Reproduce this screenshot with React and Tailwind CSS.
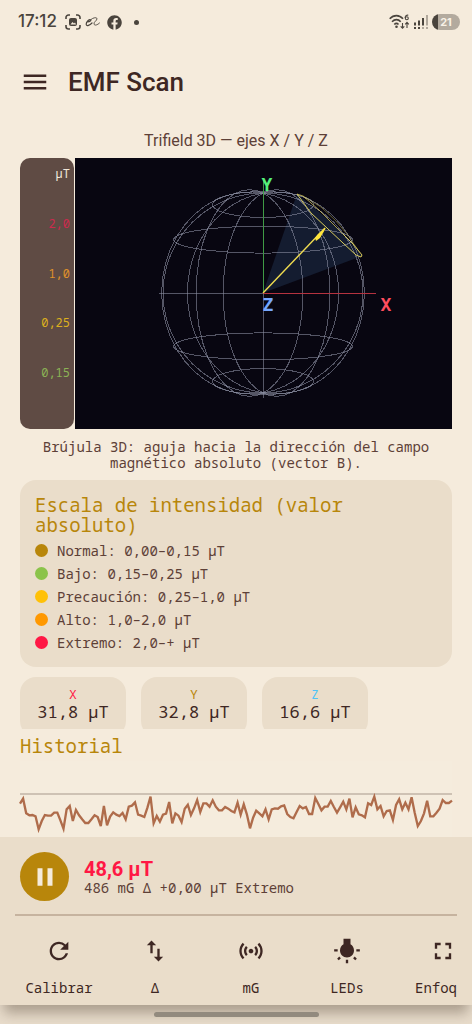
import { useState } from "react";
import { MdMenu, MdPause, MdPlayArrow, MdRefresh, MdImportExport, MdSensors, MdWbIncandescent, MdFullscreen } from "react-icons/md";
import { FaFacebook } from "react-icons/fa";

const escala = [
  { label: "2,0", color: "text-[#cc2a4e]" },
  { label: "1,0", color: "text-[#e0922a]" },
  { label: "0,25", color: "text-[#dcb01e]" },
  { label: "0,15", color: "text-[#8bb255]" },
];

const niveles = [
  { texto: "Normal: 0,00–0,15 µT", color: "bg-[#b8860b]" },
  { texto: "Bajo: 0,15–0,25 µT", color: "bg-[#8bc34a]" },
  { texto: "Precaución: 0,25–1,0 µT", color: "bg-[#ffc107]" },
  { texto: "Alto: 1,0–2,0 µT", color: "bg-[#ff9800]" },
  { texto: "Extremo: 2,0–+ µT", color: "bg-[#ff1744]" },
];

const ejes = [
  { eje: "X", valor: "31,8 µT", color: "text-[#ff1744]" },
  { eje: "Y", valor: "32,8 µT", color: "text-[#b8860b]" },
  { eje: "Z", valor: "16,6 µT", color: "text-[#4fc3f7]" },
];

const acciones = [
  { label: "Calibrar", Icon: MdRefresh, caja: "w-[88px] items-center" },
  { label: "Δ", Icon: MdImportExport, caja: "w-[88px] items-center" },
  { label: "mG", Icon: MdSensors, caja: "w-[88px] items-center" },
  { label: "LEDs", Icon: MdWbIncandescent, caja: "w-[88px] items-center" },
  { label: "Enfoq", Icon: MdFullscreen, caja: "w-[58px] items-end" },
];

const muestras = [
  143, 128, 172, 178, 177, 181, 220, 195, 177, 179, 179, 170, 170, 193, 218, 160, 150, 195, 162, 178, 190, 201, 201,
  190, 178, 183, 210, 150, 208, 182, 169, 176, 180, 171, 190, 152, 149, 139, 176, 179, 183, 155, 122, 202, 180, 197,
  176, 173, 138, 202, 172, 179, 198, 158, 146, 177, 157, 132, 168, 142, 142, 152, 133, 152, 163, 163, 153, 158, 165,
  169, 140, 176, 145, 175, 217, 185, 164, 172, 181, 160, 190, 160, 157, 158, 151, 148, 174, 183, 187, 168, 150, 157,
  153, 174, 174, 126, 144, 163, 152, 152, 135, 153, 170, 154, 137, 160, 128, 184, 154, 175, 178, 184, 142, 147, 122,
  160, 150, 181, 165, 163, 192, 147, 130, 160, 140, 160, 124, 170, 210, 195, 172, 134, 181, 181, 170, 158, 132, 141,
  141, 134,
];

// perspective projection of a point on the unit sphere
const RADIO = 100;
const CAMARA = 3.43;
function proyectar(x, y, z) {
  const k = (RADIO * CAMARA) / (CAMARA - z);
  return `${(x * k).toFixed(1)},${(-y * k).toFixed(1)}`;
}

const vueltas = Array.from({ length: 49 }, (_, i) => (i * Math.PI) / 24);
const rad = (g) => (g * Math.PI) / 180;

const paralelos = [-60, -30, 0, 30, 60].map((g) =>
  vueltas.map((t) => proyectar(Math.cos(rad(g)) * Math.sin(t), Math.sin(rad(g)), Math.cos(rad(g)) * Math.cos(t))).join(" ")
);
const meridianos = [0, 30, 60, 90, 120, 150].map((g) =>
  vueltas.map((t) => proyectar(Math.cos(t) * Math.sin(rad(g)), Math.sin(t), Math.cos(t) * Math.cos(rad(g)))).join(" ")
);

function Esfera() {
  return (
    <svg viewBox="-188 -135 377 271" className="block w-full" role="img" aria-label="Brújula 3D">
      <polygon points="0,0 34,-99 62,-76 82,-58 99,-37" fill="#141c30" />
      <g fill="none" stroke="#8d90a3" strokeWidth="1" strokeOpacity="0.58" shapeRendering="crispEdges">
        {[...paralelos, ...meridianos].map((p, i) => (
          <polyline key={i} points={p} />
        ))}
      </g>
      <g strokeWidth="1" shapeRendering="crispEdges">
        <line x1="0" y1="0" x2="113" y2="0" stroke="#b5323f" />
        <line x1="0" y1="0" x2="0" y2="-113" stroke="#3f9a45" />
      </g>
      <g fill="none" stroke="#d8cb5c" strokeWidth="1">
        <path d="M34 -99 L48 -80 L64 -65 L80 -50 L93 -38 L98 -36 L99 -38 L90 -49 L80 -59" />
        <path d="M34 -99 L40 -97 L56 -83 L80 -59" strokeOpacity="0.75" />
        <path d="M40 -97 L58 -86 L72 -73 L84 -59 L97 -40" strokeOpacity="0.45" />
        <line x1="0" y1="0" x2="62" y2="-65" stroke="#f0dc50" strokeWidth="1.4" />
      </g>
      <polygon points="63,-65 57,-55 53,-52 52,-55 55,-59" fill="#ffe43b" />
      <g className="font-['DejaVu_Sans_Mono',monospace] text-[18px] font-bold" textAnchor="middle">
        <text x="4" y="-102" fill="#55f07a">Y</text>
        <text x="5" y="18" fill="#75a7ff">Z</text>
        <text x="123" y="18" fill="#ff4d5e">X</text>
      </g>
    </svg>
  );
}

function Historial() {
  const paso = 1296 / (muestras.length - 1);
  const puntos = muestras.map((m, i) => `${(i * paso).toFixed(1)},${m}`).join(" ");
  return (
    <svg viewBox="0 15 1296 210" className="block w-full overflow-visible" role="img" aria-label="Gráfico del historial">
      <rect x="0" y="15" width="1296" height="231" fill="#f5ecdd" />
      <line x1="0" y1="114" x2="1296" y2="114" stroke="#c1b5a6" strokeWidth="4" />
      <polyline points={puntos} fill="none" stroke="#af6c4b" strokeWidth="7" />
    </svg>
  );
}

function BarraEstado() {
  return (
    <div className="flex h-11 items-center pr-3 pl-[18px] text-[#4a443d]">
      <span className="font-[Inter,sans-serif] text-[17px] font-medium">17:12</span>
      <svg viewBox="0 0 16 16" className="ml-2 size-4" fill="none" stroke="currentColor" strokeWidth="1.6">
        <path d="M1 5V3.500A2.500 2.500 0 0 1 3.500 1H5M11 1h1.500A2.500 2.500 0 0 1 15 3.500V5M15 11v1.500a2.500 2.500 0 0 1-2.500 2.500H11M5 15H3.500A2.500 2.500 0 0 1 1 12.500V11" />
        <rect x="4" y="4" width="8" height="8" rx="2" fill="currentColor" stroke="none" />
        <path d="M5.500 10.500 7.500 8l1.500 1.500 1-1 1 2z" fill="#f5ebdc" stroke="none" />
      </svg>
      <svg viewBox="0 0 16 12" className="ml-1 h-3 w-4" fill="none" stroke="currentColor" strokeWidth="0.9" strokeLinecap="round">
        <path d="M2.500 6C5 5.800 6.500 4.500 5.500 3.800S1 5.500 1.200 8.200 5 9 7 7" strokeWidth="1.200" />
        <path d="M6 3.500C8 1.500 12 1 12 2.800S8.500 6 9 8s3.500 1 5.500-1" />
      </svg>
      <FaFacebook className="ml-1.5 size-[15px]" />
      <span className="ml-3 size-[5px] rounded-full bg-current" />
      <svg viewBox="0 0 21 16" className="ml-auto h-4 w-[21px]" fill="none" stroke="currentColor" strokeWidth="1.600">
        <path d="M.7 4.800c4-4.300 9.600-4.300 13.300 0M3 7.800c2.800-2.900 6.200-2.900 8.700 0M5.300 10.500c1.500-1.500 2.800-1.500 4.200 0" />
        <circle cx="7.500" cy="12.800" r="1.300" fill="currentColor" stroke="none" />
        <path d="M13.500 9v5M11.700 12.300l1.800 1.900 1.800-1.900M18 14V8.500M16.200 10.300 18 8.400l1.800 1.900" strokeWidth="1.100" />
        <path d="M19.300 1.200c-1.800-.4-3.200.8-3.200 2.800" strokeWidth="1.100" />
        <circle cx="17.800" cy="4.200" r="1.500" strokeWidth="1.100" />
      </svg>
      <svg viewBox="0 0 14 16" className="ml-1 h-4 w-3.5" fill="currentColor">
        <path d="M0 8.500h2v3H0zM4 6.500h2v5H4zM8 4h2v7.500H8zM0 13h2v2H0zM4 13h2v2H4z" />
        <path d="M12 1h2v10.500h-2zM8 13h2v2H8zM12 13h2v2h-2z" opacity="0.4" />
      </svg>
      <span className="ml-1 flex h-4 w-7 items-center justify-center rounded-full bg-linear-to-r from-[#4a443d] from-20% to-[#b3aa9e] to-20% font-[Inter,sans-serif] text-[11px] font-bold text-[#f8f1e6]">
        21
      </span>
    </div>
  );
}

export default function App() {
  const [pausado, setPausado] = useState(false);

  return (
    <div className="flex min-h-screen flex-col overflow-hidden bg-[#f5ebdc] font-['Noto_Sans_Mono','DejaVu_Sans_Mono',monospace] text-[#5d4037]">
      <BarraEstado />

      <header className="flex h-[76px] items-center gap-[18px] px-5 font-[Roboto,sans-serif] text-[#3e2723]">
        <button aria-label="Menú">
          <MdMenu className="size-[30px]" />
        </button>
        <h1 className="text-[26px] font-medium">EMF Scan</h1>
      </header>

      <main className="px-5">
        <p className="mt-3 mb-2 text-center font-[Roboto,sans-serif] text-[16px] leading-[18px]">Trifield 3D — ejes X / Y / Z</p>

        <section className="flex gap-px">
          <div className="flex w-[54px] shrink-0 flex-col justify-between rounded-[10px] bg-[#5f4b44] pt-2 pr-1 pb-12 text-right text-[12px] leading-4">
            <span className="text-[#f0e6da]">µT</span>
            {escala.map((e) => (
              <span key={e.label} className={e.color}>{e.label}</span>
            ))}
          </div>
          <div className="flex-1 bg-[#080611]">
            <Esfera />
          </div>
        </section>

        <p className="mt-[10px] text-center text-[14px] leading-4">
          Brújula 3D: aguja hacia la dirección del campo magnético absoluto (vector B).
        </p>

        <section className="mt-[9px] rounded-2xl bg-[#eaddca] p-[15px]">
          <h2 className="text-[19px] leading-5 text-[#b8860b]">Escala de intensidad (valor absoluto)</h2>
          <ul className="mt-[5px] flex flex-col gap-[3px]">
            {niveles.map((n) => (
              <li key={n.texto} className="flex h-5 items-center gap-[9px] text-[14px]">
                <span className={`size-[13px] rounded-full ${n.color}`} />
                {n.texto}
              </li>
            ))}
          </ul>
        </section>

        <section className="mt-[10px] flex h-[52px] gap-[15px] overflow-hidden">
          {ejes.map((e) => (
            <div key={e.eje} className="h-[60px] w-[106px] rounded-2xl bg-[#eaddca] pt-[9px] text-center">
              <div className={`text-[13px] leading-4 ${e.color}`}>{e.eje}</div>
              <div className="text-[17px] leading-5 text-[#3e2723]">{e.valor}</div>
            </div>
          ))}
        </section>

        <h2 className="mt-[6px] mb-1 text-[19px] leading-[22px] text-[#b8860b]">Historial</h2>
        <Historial />
      </main>

      <footer className="mt-auto bg-[#e8dccb]">
        <div className="bg-[#eaddca] px-[15px] pt-[15px] shadow-[0_12px_12px_-4px_rgba(80,65,50,0.4)]">
          <div className="flex items-center gap-[15px] px-[5px] pb-[13px]">
            <button
              onClick={() => setPausado(!pausado)}
              aria-label={pausado ? "Reanudar" : "Pausar"}
              className="flex size-[49px] items-center justify-center rounded-full bg-[#b8860b] text-[#f5ebdc]"
            >
              {pausado ? <MdPlayArrow className="size-[30px]" /> : <MdPause className="size-[30px]" />}
            </button>
            <div>
              <p className="font-[Roboto,sans-serif] text-[20px] leading-[22px] font-bold text-[#ff1744]">48,6 µT</p>
              <p className="text-[14px] leading-4">486 mG Δ +0,00 µT Extremo</p>
            </div>
          </div>
          <hr className="border-t-2 border-[#c6b39f]" />
          <nav className="flex gap-2 overflow-hidden text-[#3e2723]">
            {acciones.map(({ label, Icon, caja }) => (
              <button key={label} className={`flex h-[89px] shrink-0 flex-col gap-[13px] pt-[21px] text-[14px] leading-5 ${caja}`}>
                <Icon className="size-7" />
                {label}
              </button>
            ))}
          </nav>
        </div>
        <div className="flex h-[19px] items-center justify-center">
          <span className="z-10 h-[5px] w-[165px] rounded-full bg-[#928a7e]" />
        </div>
      </footer>
    </div>
  );
}
